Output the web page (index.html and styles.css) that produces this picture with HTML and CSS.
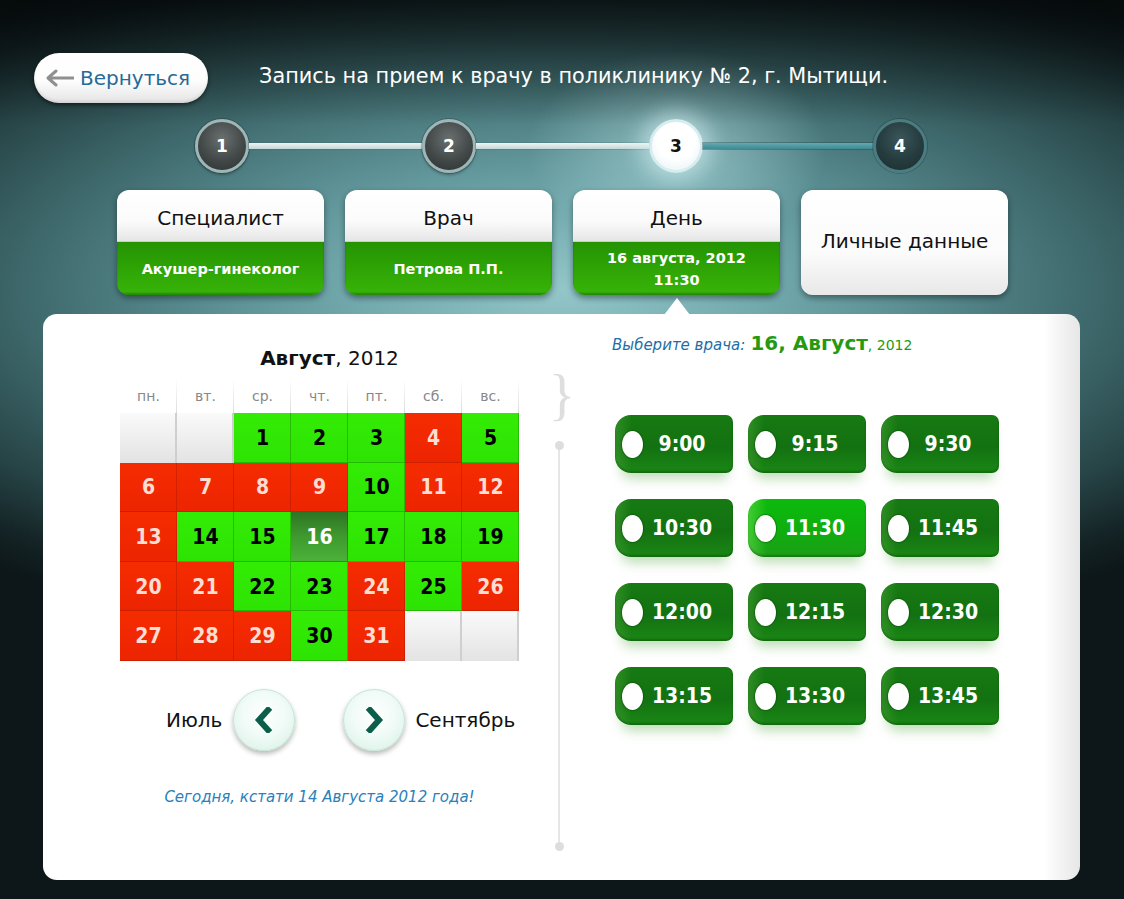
FILE: index.html
```html
<!DOCTYPE html>
<html lang="ru">
<head>
<meta charset="utf-8">
<title>Запись на прием</title>
<link rel="stylesheet" href="styles.css">
</head>
<body>
<div class="page">
  <header class="top">
    <button class="back">
      <svg class="back-arrow" width="30" height="18" viewBox="0 0 30 18"><path d="M29 9H5M12 2L4 9l8 7" fill="none" stroke="#8f8f8f" stroke-width="3" stroke-linecap="round" stroke-linejoin="round"/></svg>
      <span>Вернуться</span>
    </button>
    <h1 class="title">Запись на прием к врачу в поликлинику № 2, г. Мытищи.</h1>
  </header>

  <div class="stepper">
    <div class="step done">1</div>
    <div class="line"></div>
    <div class="step done">2</div>
    <div class="line"></div>
    <div class="step current">3</div>
    <div class="line dark"></div>
    <div class="step todo">4</div>
  </div>

  <div class="cards">
    <div class="card">
      <div class="card-head">Специалист</div>
      <div class="card-val">Акушер-гинеколог</div>
    </div>
    <div class="card">
      <div class="card-head">Врач</div>
      <div class="card-val">Петрова П.П.</div>
    </div>
    <div class="card">
      <div class="card-head">День</div>
      <div class="card-val two">16 августа, 2012<br>11:30</div>
    </div>
    <div class="card card-empty">Личные данные</div>
  </div>

  <main class="panel">
    <span class="notch"></span>

    <section class="cal">
      <div class="cal-title"><b>Август</b>, 2012</div>
      <div class="wk">
        <span>пн.</span><span>вт.</span><span>ср.</span><span>чт.</span><span>пт.</span><span>сб.</span><span>вс.</span>
      </div>
      <div class="days">
        <span class="d e"></span><span class="d e"></span><span class="d g">1</span><span class="d g">2</span><span class="d g">3</span><span class="d r">4</span><span class="d g">5</span>
        <span class="d r">6</span><span class="d r">7</span><span class="d r">8</span><span class="d r">9</span><span class="d g">10</span><span class="d r">11</span><span class="d r">12</span>
        <span class="d r">13</span><span class="d g">14</span><span class="d g">15</span><span class="d s">16</span><span class="d g">17</span><span class="d g">18</span><span class="d g">19</span>
        <span class="d r">20</span><span class="d r">21</span><span class="d g">22</span><span class="d g">23</span><span class="d r">24</span><span class="d g">25</span><span class="d r">26</span>
        <span class="d r">27</span><span class="d r">28</span><span class="d r">29</span><span class="d g">30</span><span class="d r">31</span><span class="d e"></span><span class="d e"></span>
      </div>
      <div class="nav">
        <span class="nav-label">Июль</span>
        <button class="nav-btn prev"><svg width="20" height="26" viewBox="0 0 20 26"><path d="M14 3L5 13l9 10" fill="none" stroke="#0b5e4a" stroke-width="6" stroke-linecap="square"/></svg></button>
        <button class="nav-btn next"><svg width="20" height="26" viewBox="0 0 20 26"><path d="M6 3l9 10-9 10" fill="none" stroke="#0b5e4a" stroke-width="6" stroke-linecap="square"/></svg></button>
        <span class="nav-label">Сентябрь</span>
      </div>
      <p class="today">Сегодня, кстати 14 Августа 2012 года!</p>
    </section>

    <div class="divider">
      <span class="brace">}</span>
      <span class="dot"></span>
      <span class="vline"></span>
      <span class="dot"></span>
    </div>

    <section class="times">
      <div class="times-head"><i>Выберите врача:</i> <b>16, Август</b><small>, 2012</small></div>
      <div class="slots">
        <div class="slot"><span class="hole"></span><span class="t">9:00</span></div>
        <div class="slot"><span class="hole"></span><span class="t">9:15</span></div>
        <div class="slot"><span class="hole"></span><span class="t">9:30</span></div>
        <div class="slot"><span class="hole"></span><span class="t">10:30</span></div>
        <div class="slot sel"><span class="hole"></span><span class="t">11:30</span></div>
        <div class="slot"><span class="hole"></span><span class="t">11:45</span></div>
        <div class="slot"><span class="hole"></span><span class="t">12:00</span></div>
        <div class="slot"><span class="hole"></span><span class="t">12:15</span></div>
        <div class="slot"><span class="hole"></span><span class="t">12:30</span></div>
        <div class="slot"><span class="hole"></span><span class="t">13:15</span></div>
        <div class="slot"><span class="hole"></span><span class="t">13:30</span></div>
        <div class="slot"><span class="hole"></span><span class="t">13:45</span></div>
      </div>
    </section>
  </main>
</div>
</body>
</html>
```

FILE: styles.css
```css
* { box-sizing: border-box; }
html, body { margin: 0; padding: 0; }
body {
  width: 1124px;
  height: 899px;
  overflow: hidden;
  font-family: "DejaVu Sans", "Liberation Sans", sans-serif;
  background-color: #0b1214;
  background-image:
    linear-gradient(to bottom, rgba(3,6,7,0.75) 0px, rgba(3,6,7,0.35) 60px, rgba(3,6,7,0) 125px),
    radial-gradient(ellipse 150px 100px at 677px 150px, rgba(200,240,242,0.5), rgba(200,240,242,0) 100%),
    radial-gradient(ellipse 880px 360px at 560px 290px, #93c6c9 0%, #74abaf 22%, #5a8e92 40%, #3f6a6d 60%, #254143 80%, #142325 92%, #0d1719 100%);
}
.page { width: 1124px; height: 899px; }

/* header */
.top {
  display: flex;
  align-items: center;
  padding: 53px 0 0 34px;
}
.back {
  display: flex;
  align-items: center;
  gap: 6px;
  height: 50px;
  padding: 0 18px 0 10px;
  border: 0;
  border-radius: 25px;
  background: linear-gradient(#ffffff 0%, #fdfdfd 55%, #e4e4e4 100%);
  box-shadow: 0 2px 4px rgba(0,0,0,0.55), inset 0 -2px 3px rgba(0,0,0,0.08);
  font-family: inherit;
  font-size: 20px;
  color: #266b97;
}
.back-arrow { display: block; }
.title {
  margin: 0 0 5px 51px;
  font-size: 20.8px;
  font-weight: normal;
  color: #ffffff;
  line-height: 28px;
}

/* stepper */
.stepper {
  display: flex;
  align-items: center;
  margin: 16px 0 0 195px;
  height: 54px;
}
.step {
  width: 54px;
  height: 54px;
  flex: none;
  border-radius: 50%;
  display: flex;
  align-items: center;
  justify-content: center;
  font-size: 17px;
  font-weight: bold;
  color: #fff;
}
.step.done {
  background: radial-gradient(circle at 50% 35%, #6a6f6f 0%, #434848 55%, #2a2f2f 100%);
  border: 3px solid #9fb6b6;
  box-shadow: 0 0 0 1px rgba(0,0,0,0.18), 0 2px 3px rgba(0,0,0,0.3);
}
.step.current {
  background: radial-gradient(circle at 50% 40%, #ffffff 0%, #ffffff 50%, #dff0f2 100%);
  border: 3px solid #d6ecef;
  box-shadow: 0 0 20px 8px rgba(220,248,250,0.5);
  color: #111;
}
.step.todo {
  background: radial-gradient(circle at 50% 35%, #3b5558 0%, #253c3f 55%, #1a2c2e 100%);
  border: 3px solid #4b7c82;
  box-shadow: 0 0 0 1px rgba(0,0,0,0.2);
}
.line {
  width: 173px;
  height: 6px;
  flex: none;
  background: linear-gradient(#eef4f4, #c4d6d6);
  box-shadow: 0 0 0 1px rgba(60,90,90,0.25);
}
.line.dark {
  width: 170px;
  background: linear-gradient(#63a9b1, #3f8a93);
  box-shadow: 0 0 0 1px rgba(20,60,65,0.35);
}

/* cards */
.cards {
  display: flex;
  gap: 21px;
  margin: 17px 0 0 117px;
}
.card {
  width: 207px;
  height: 105px;
  border-radius: 12px;
  overflow: hidden;
  display: flex;
  flex-direction: column;
  box-shadow: 0 3px 6px rgba(0,0,0,0.4);
}
.card-head {
  height: 52px;
  flex: none;
  display: flex;
  align-items: center;
  justify-content: center;
  padding-top: 4px;
  background: linear-gradient(#ffffff 0%, #fbfbfb 60%, #e6e6e6 100%);
  border-bottom: 1px solid #c9cfc9;
  font-size: 20px;
  color: #111;
}
.card-val {
  flex: 1;
  display: flex;
  align-items: center;
  justify-content: center;
  text-align: center;
  background: linear-gradient(#249302 0%, #2ea405 50%, #38b409 100%);
  box-shadow: inset 0 -2px 2px rgba(0,60,0,0.35);
  color: #fff;
  font-size: 14.5px;
  font-weight: bold;
  line-height: 22px;
}
.card-empty {
  align-items: center;
  justify-content: center;
  padding-bottom: 4px;
  background: linear-gradient(#ffffff 0%, #fbfbfb 60%, #e8e8e8 100%);
  font-size: 20px;
  color: #111;
}

/* panel */
.panel {
  position: relative;
  display: flex;
  width: 1037px;
  height: 566px;
  margin: 19px 0 0 43px;
  border-radius: 14px;
  background: linear-gradient(to right, #ffffff 0%, #ffffff 96.5%, #e6e6e6 100%);
  box-shadow: 0 2px 3px rgba(0,0,0,0.5), 0 1px 0 #9aa 0;
}
.notch {
  position: absolute;
  left: 621px;
  top: -16px;
  width: 0;
  height: 0;
  border-left: 13px solid transparent;
  border-right: 13px solid transparent;
  border-bottom: 17px solid #ffffff;
}

/* calendar */
.cal {
  width: 399px;
  margin-left: 77px;
  padding-top: 30px;
}
.cal-title {
  font-size: 20px;
  line-height: 28px;
  text-align: center;
  padding-left: 20px;
  color: #111;
}
.wk {
  display: grid;
  grid-template-columns: repeat(7, 57px);
  height: 35px;
  margin-top: 6px;
}
.wk span {
  display: flex;
  align-items: center;
  justify-content: center;
  font-size: 14px;
  color: #888;
  background-image: linear-gradient(rgba(215,215,215,0), #dcdcdc);
  background-size: 1px 100%;
  background-repeat: no-repeat;
  background-position: right top;
}
.days {
  display: grid;
  grid-template-columns: repeat(7, 57px);
  grid-template-rows: repeat(5, 49.6px);
}
.d {
  display: flex;
  align-items: center;
  justify-content: center;
  font-family: "DejaVu Sans Condensed", "DejaVu Sans", sans-serif;
  font-stretch: condensed;
  font-size: 21px;
  font-weight: bold;
}
.d.r {
  background: linear-gradient(#f62c00, #ec2400);
  color: #ffddd2;
  box-shadow: inset -1px -1px 0 rgba(150,20,0,0.35);
}
.d.g {
  background: linear-gradient(#33ec05, #2de303);
  color: #000;
  box-shadow: inset -1px -1px 0 rgba(20,110,0,0.35);
}
.d.e {
  background: linear-gradient(#fafafa, #e3e3e3);
  box-shadow: inset -2px 0 0 #cfcfcf;
}
.d.s {
  background: linear-gradient(#2f7424 0%, #3f9a2f 50%, #4cb23a 100%);
  color: #fff;
  box-shadow: inset -1px -1px 0 rgba(20,80,0,0.4);
}
.nav {
  display: flex;
  align-items: center;
  margin-top: 28px;
  padding-left: 46px;
}
.nav-label { font-size: 20px; color: #111; }
.nav-btn {
  width: 62px;
  height: 62px;
  border-radius: 50%;
  border: 1px solid #c3e6d6;
  background: radial-gradient(circle at 50% 40%, #ffffff 0%, #f1fbf7 45%, #d6f0e5 100%);
  box-shadow: 0 3px 5px rgba(0,0,0,0.28);
  display: flex;
  align-items: center;
  justify-content: center;
  padding: 0;
}
.nav-btn svg { display: block; }
.prev { margin: 0 48px 0 11px; }
.next { margin-right: 10px; }
.today {
  margin: 36px 0 0;
  text-align: center;
  font-size: 15px;
  line-height: 20px;
  font-style: italic;
  color: #2a80ba;
}

/* divider */
.divider {
  width: 14px;
  margin-left: 33px;
  padding-top: 52px;
  display: flex;
  flex-direction: column;
  align-items: center;
}
.brace {
  font-family: "Liberation Serif", serif;
  font-size: 56px;
  line-height: 58px;
  height: 58px;
  color: #dedede;
  margin-left: 6px;
}
.dot {
  width: 9px;
  height: 9px;
  border-radius: 50%;
  background: #dddddd;
  flex: none;
}
.brace + .dot { margin-top: 17px; }
.vline {
  width: 2px;
  height: 392px;
  background: #e6e6e6;
}

/* times */
.times {
  margin-left: 46px;
  padding-top: 17px;
}
.times-head {
  height: 24px;
  line-height: 24px;
  color: #259a10;
  white-space: nowrap;
}
.times-head i {
  font-size: 15px;
  color: #1d6fa6;
}
.times-head b { font-size: 20px; }
.times-head small { font-size: 14px; }
.slots {
  display: grid;
  grid-template-columns: repeat(3, 118px);
  grid-auto-rows: 58px;
  column-gap: 15px;
  row-gap: 26px;
  margin: 60px 0 0 3px;
}
.slot {
  display: flex;
  align-items: center;
  border-radius: 16px 7px 7px 16px;
  background:
    linear-gradient(to right, rgba(80,170,60,0.45) 0%, rgba(80,170,60,0) 14%),
    linear-gradient(#167a12 0%, #137111 55%, #1a8715 100%);
  box-shadow: inset 0 -2px 2px rgba(0,40,0,0.3), 0 12px 12px -6px rgba(70,160,50,0.35);
  color: #fff;
}
.slot.sel {
  background:
    linear-gradient(to right, rgba(120,230,90,0.5) 0%, rgba(120,230,90,0) 16%),
    linear-gradient(#0cba0c 0%, #0fae0f 55%, #1d9e17 100%);
}
.hole {
  width: 21px;
  height: 27px;
  margin-left: 7px;
  border-radius: 50%;
  background: #ffffff;
  box-shadow: 0 0 1px 1px rgba(0,60,0,0.35);
  flex: none;
}
.t {
  flex: 1;
  text-align: center;
  padding-right: 12px;
  font-family: "DejaVu Sans Condensed", "DejaVu Sans", sans-serif;
  font-stretch: condensed;
  font-size: 21px;
  font-weight: bold;
}
```
